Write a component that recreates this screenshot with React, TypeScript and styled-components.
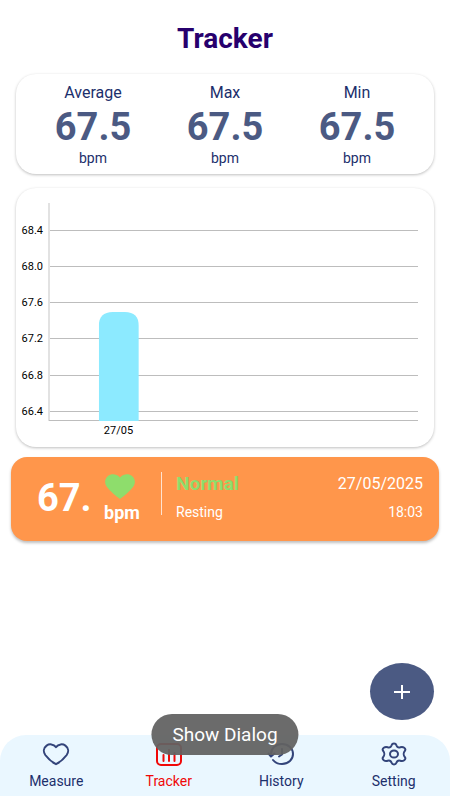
import React from "react";
import styled, { createGlobalStyle } from "styled-components";

const Global = createGlobalStyle`
  *, *::before, *::after { box-sizing: border-box; }
  body { margin: 0; background: #fff; font-family: Roboto, "Noto Sans", sans-serif; }
  button { font: inherit; border: 0; padding: 0; cursor: pointer; }
  h1, p, dl, dt, dd { margin: 0; }
`;

const Page = styled.div`
  position: relative;
  display: flex;
  flex-direction: column;
  min-height: 100vh;
  padding-bottom: 4px;
  overflow: hidden;
`;

const Main = styled.main`
  flex: 1;
  display: flex;
  flex-direction: column;
`;

const Title = styled.h1`
  padding: 21px 0 17px;
  color: #27006d;
  font-size: 28px;
  line-height: 36px;
  font-weight: 700;
  text-align: center;
`;

const Card = styled.section`
  margin: 0 16px 14px;
  border-radius: 20px;
  background: #fff;
  box-shadow: 0 1px 3px rgba(0, 0, 0, 0.26);
`;

const Stats = styled.dl`
  display: grid;
  grid-template-columns: repeat(3, 1fr);
  padding: 8px 11px;
  text-align: center;
  color: #1c2f6c;
`;

const StatLabel = styled.dt`
  font-size: 16px;
  line-height: 22px;
`;

const StatValue = styled.dd`
  color: #4b5a83;
  font-size: 38px;
  line-height: 46px;
  font-weight: 700;
`;

const StatUnit = styled.dd`
  font-size: 14px;
  line-height: 16px;
`;

const ChartCard = styled(Card)`
  margin-bottom: 10px;
  padding: 15px 16px 0 0;
`;

const Plot = styled.svg`
  display: block;
  width: 100%;
  height: 244px;
  font-size: 11px;
`;

const Reading = styled.article`
  display: flex;
  align-items: flex-start;
  min-height: 84px;
  margin: 0 11px;
  padding: 15px 16px 14px 26px;
  border-radius: 16px;
  background: #ff964b;
  box-shadow: 0 2px 3px rgba(0, 0, 0, 0.26);
  color: #fff;
`;

const Rate = styled.p`
  width: 67px;
  font-size: 38px;
  line-height: 52px;
  font-weight: 700;
`;

const Pulse = styled.div`
  display: flex;
  flex-direction: column;
  width: 40px;
  padding-top: 2px;
  font-size: 18px;
  line-height: 28px;
  font-weight: 700;
`;

const Divider = styled.span`
  width: 1px;
  height: 43px;
  margin: 0 14px 0 17px;
  background: #ffe3d0;
`;

const Details = styled.div`
  flex: 1;
  display: flex;
  flex-direction: column;
  gap: 4px;
`;

const Line = styled.div<{ $small?: boolean }>`
  display: flex;
  justify-content: space-between;
  font-size: ${(p) => (p.$small ? 14 : 16)}px;
  line-height: 24px;
`;

const Status = styled.strong`
  color: #8edd6c;
  font-size: 19px;
  font-weight: 700;
`;

const AddButton = styled.button`
  align-self: flex-end;
  display: grid;
  place-items: center;
  width: 64px;
  height: 57px;
  margin: auto 16px 15px;
  border-radius: 50%;
  background: #4b5a83;
`;

const Nav = styled.nav`
  display: grid;
  grid-template-columns: repeat(4, 1fr);
  height: 61px;
  border-radius: 26px 26px 0 0;
  background: #eaf7ff;
`;

const NavItem = styled.a<{ $active?: boolean }>`
  display: flex;
  flex-direction: column;
  align-items: center;
  gap: 4px;
  padding-top: 7px;
  color: ${(p) => (p.$active ? "#f00808" : "#1c2f6c")};
  font-size: 14px;
  line-height: 18px;
  text-decoration: none;
`;

const Toast = styled.div`
  position: absolute;
  bottom: 45px;
  left: 50%;
  transform: translateX(-50%);
  padding: 1px 21px 0;
  border-radius: 21px;
  background: rgba(98, 98, 98, 0.94);
  color: #fff;
  font-size: 19px;
  line-height: 40px;
  white-space: nowrap;
`;

const stats = [
  { label: "Average", value: "67.5" },
  { label: "Max", value: "67.5" },
  { label: "Min", value: "67.5" },
];

const ticks = [
  { label: "68.4", y: 27 },
  { label: "68.0", y: 63 },
  { label: "67.6", y: 99 },
  { label: "67.2", y: 135 },
  { label: "66.8", y: 172 },
  { label: "66.4", y: 208 },
];

const Icon = ({ children }: { children: React.ReactNode }) => (
  <svg width="28" height="26" viewBox="0 0 28 26" fill="none" stroke="currentColor" strokeWidth="2" strokeLinecap="round" strokeLinejoin="round" aria-hidden="true">
    {children}
  </svg>
);

const HeartIcon = () => (
  <Icon>
    <path stroke="#33447a" d="M14 5.2C11.5 1.8 7.2 1.7 4.6 3.6C1.3 6 1.2 10 3.3 13C5.8 16.4 10.5 20.4 14 22.2C17.5 20.4 22.2 16.4 24.7 13C26.8 10 26.7 6 23.4 3.6C20.8 1.7 16.5 1.8 14 5.2Z" />
  </Icon>
);

const TrackerIcon = () => (
  <Icon>
    <rect x="2" y="2" width="24" height="21" rx="4" />
    <path d="M8.5 13v6M14 8v11M19.5 11v8" />
  </Icon>
);

const HistoryIcon = () => (
  <Icon>
    <g stroke="#33447a">
      <path d="M4 12C4 6 9 2 15 2C21.5 2 26 6.5 26 12C26 17.5 21.5 22 15 22C11 22 8 20.5 6 18" />
      <path d="M1.5 11.5L4 14.5L7.5 11.5M15 7v5.5L12 14.5" />
    </g>
  </Icon>
);

const GearIcon = () => (
  <Icon>
    <g stroke="#33447a">
      <path d="M11.6 3.2C12.3.9 15.7.9 16.4 3.2C17 5 18.5 5.8 20.3 5.3C23.2 4.2 26.3 6.5 25 8.7C23 11.3 23 12.7 25 15.3C26.3 17.5 23.2 19.8 20.3 18.7C18.500 18.2 17 19 16.4 20.8C15.7 23.1 12.3 23.1 11.6 20.8C11 19 9.5 18.2 7.7 18.7C4.8 19.8 1.7 17.5 3 15.3C5 12.7 5 11.3 3 8.7C1.7 6.5 4.8 4.2 7.7 5.3C9.5 5.8 11 5 11.6 3.2Z" />
      <ellipse cx="14" cy="12" rx="4" ry="3.6" />
    </g>
  </Icon>
);

export default function App() {
  return (
    <Page>
      <Global />
      <Main>
        <Title>Tracker</Title>
        <Card>
          <Stats>
            {stats.map((s) => (
              <div key={s.label}>
                <StatLabel>{s.label}</StatLabel>
                <StatValue>{s.value}</StatValue>
                <StatUnit>bpm</StatUnit>
              </div>
            ))}
          </Stats>
        </Card>
        <ChartCard>
          <Plot role="img" aria-label="Heart rate by day">
            {ticks.map((t) => (
              <g key={t.label}>
                <text x="27" y={t.y + 4} textAnchor="end">{t.label}</text>
                <rect x="33" y={t.y} width="92%" height="1" fill="#bdbdbd" />
              </g>
            ))}
            <rect x="32" y="0" width="2" height="218" fill="#e2e2e2" />
            <rect x="33" y="217" width="92%" height="1" fill="#bdbdbd" />
            <svg x="20.6%" y="109" width="40" height="109">
              <path d="M0 109V14Q0 0 14 0H26Q40 0 40 14V109Z" fill="#8ceaff" />
            </svg>
            <text x="25.5%" y="231" textAnchor="middle">27/05</text>
          </Plot>
        </ChartCard>
        <Reading>
          <Rate>67.</Rate>
          <Pulse>
            <svg width="32" height="25" viewBox="-1 0 32 25" aria-hidden="true">
              <path fill="#8edd6c" d="M15 3.5C11.5-.6 6-.7 3 2C-.6 5-.7 9.500 2 13C5 17 11 22 15 25C19 22 25 17 28 13C30.7 9.500 30.6 5 27 2C24-.7 18.500-.6 15 3.5Z" />
            </svg>
            bpm
          </Pulse>
          <Divider />
          <Details>
            <Line>
              <Status>Normal</Status>
              <time>27/05/2025</time>
            </Line>
            <Line $small>
              <span>Resting</span>
              <time>18:03</time>
            </Line>
          </Details>
        </Reading>
        <AddButton aria-label="Add measurement">
          <svg width="18" height="16" viewBox="0 0 18 16" stroke="#fff" strokeWidth="2" aria-hidden="true">
            <path d="M1 8H17M9 1V15" />
          </svg>
        </AddButton>
      </Main>
      <Nav>
        <NavItem href="#measure"><HeartIcon />Measure</NavItem>
        <NavItem href="#tracker" $active aria-current="page"><TrackerIcon />Tracker</NavItem>
        <NavItem href="#history"><HistoryIcon />History</NavItem>
        <NavItem href="#setting"><GearIcon />Setting</NavItem>
      </Nav>
      <Toast role="status">Show Dialog</Toast>
    </Page>
  );
}
